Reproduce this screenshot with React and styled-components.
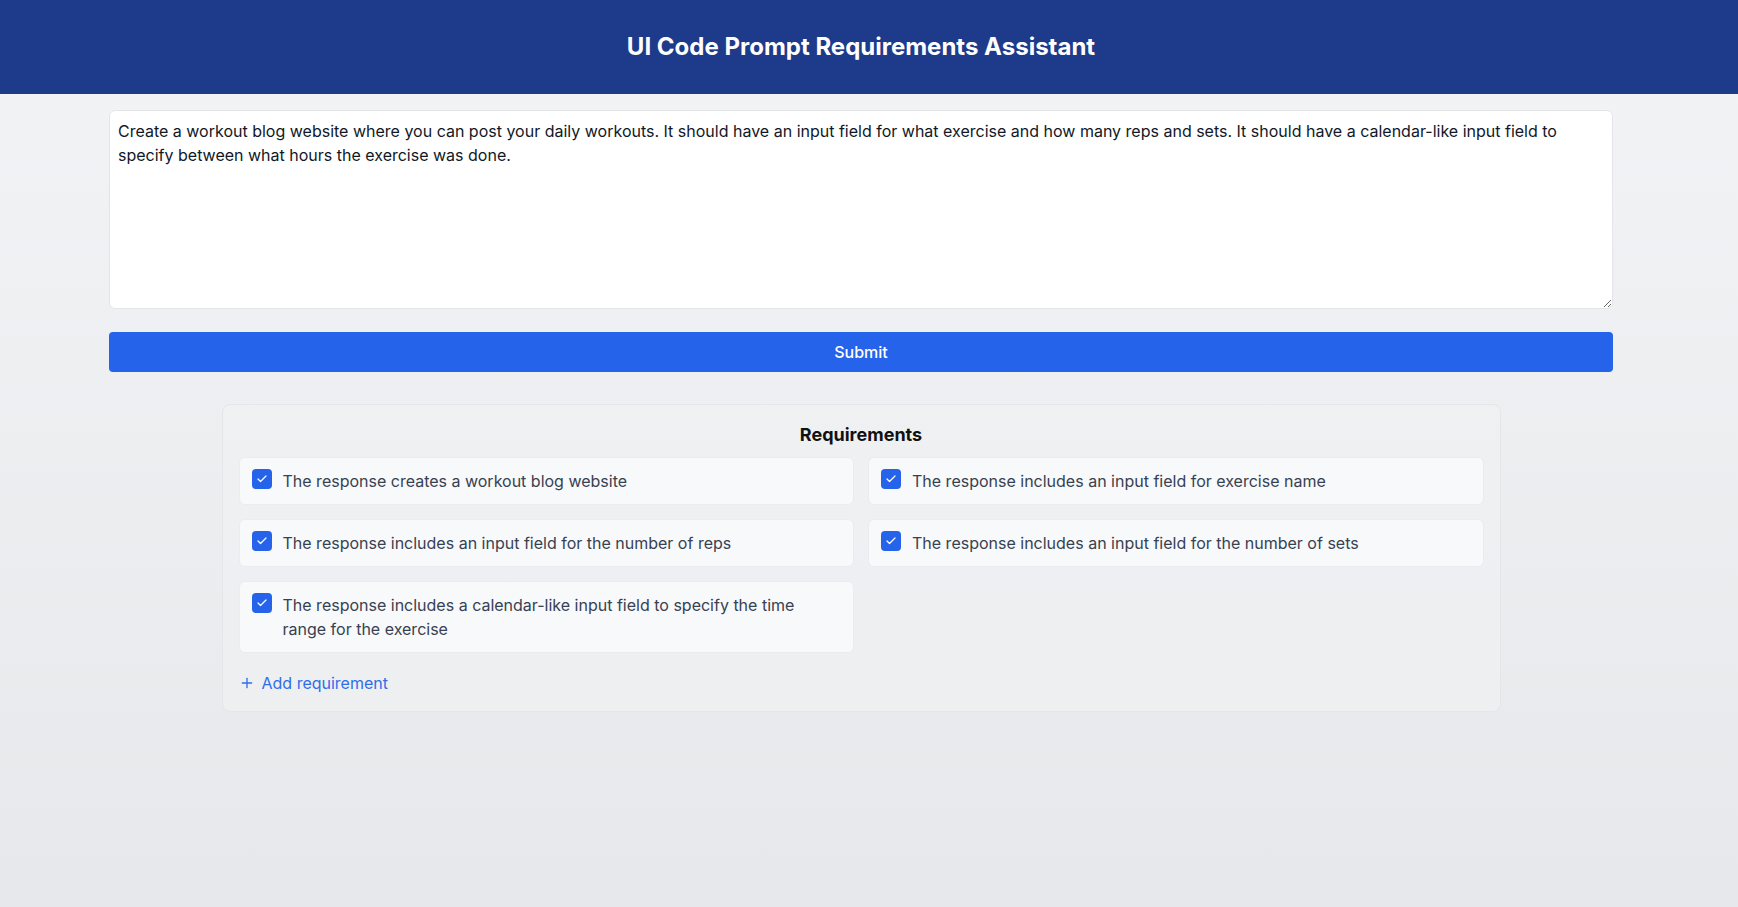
import React, { useState } from "react";
import styled, { createGlobalStyle } from "styled-components";
import { Plus, Check } from "lucide-react";

const GlobalStyle = createGlobalStyle`
  * {
    box-sizing: border-box;
  }
  body {
    margin: 0;
    font-family: Inter, "Noto Sans", "Liberation Sans", sans-serif;
    background: #eceef1;
  }
`;

const initialRequirements = [
  { id: 1, text: "The response creates a workout blog website", checked: true },
  { id: 2, text: "The response includes an input field for exercise name", checked: true },
  { id: 3, text: "The response includes an input field for the number of reps", checked: true },
  { id: 4, text: "The response includes an input field for the number of sets", checked: true },
  {
    id: 5,
    text: "The response includes a calendar-like input field to specify the time range for the exercise",
    checked: true,
  },
];

const App = () => {
  const [prompt, setPrompt] = useState(
    "Create a workout blog website where you can post your daily workouts. It should have an input field for what exercise and how many reps and sets. It should have a calendar-like input field to specify between what hours the exercise was done."
  );
  const [requirements, setRequirements] = useState(initialRequirements);

  const toggle = (id) => {
    setRequirements(
      requirements.map((r) => (r.id === id ? { ...r, checked: !r.checked } : r))
    );
  };

  return (
    <>
      <GlobalStyle />
      <Page>
        <Header>
          <Title>UI Code Prompt Requirements Assistant</Title>
        </Header>
        <Main>
          <PromptInput value={prompt} onChange={(e) => setPrompt(e.target.value)} />
          <SubmitButton>Submit</SubmitButton>
          <Panel>
            <PanelTitle>Requirements</PanelTitle>
            <Grid>
              {requirements.map((req) => (
                <Card key={req.id}>
                  <CheckBox $checked={req.checked} onClick={() => toggle(req.id)}>
                    {req.checked && <Check size={12} strokeWidth={2.5} color="#ffffff" />}
                  </CheckBox>
                  <CardText>{req.text}</CardText>
                </Card>
              ))}
            </Grid>
            <AddButton>
              <Plus size={16} strokeWidth={2} />
              Add requirement
            </AddButton>
          </Panel>
        </Main>
      </Page>
    </>
  );
};

export default App;

const Page = styled.div`
  min-height: 100vh;
  background: linear-gradient(180deg, #f3f4f6 0%, #e7e8eb 100%);
`;

const Header = styled.header`
  height: 94px;
  padding-right: 16px;
  background-color: #1e3a8a;
  display: flex;
  align-items: center;
  justify-content: center;
`;

const Title = styled.h1`
  margin: 0;
  color: #ffffff;
  font-size: 24px;
  line-height: 32px;
  font-weight: 700;
`;

const Main = styled.main`
  padding: 16px 125px 40px 109px;
  display: flex;
  flex-direction: column;
`;

const PromptInput = styled.textarea`
  width: 100%;
  height: 199px;
  padding: 8px;
  border: 1px solid #e3e5e8;
  border-radius: 6px;
  background: #ffffff;
  font-family: inherit;
  font-size: 16px;
  line-height: 24px;
  color: #111827;
  outline: none;
`;

const SubmitButton = styled.button`
  margin-top: 23px;
  height: 40px;
  width: 100%;
  border: none;
  border-radius: 4px;
  background-color: #2563eb;
  color: #ffffff;
  font-family: inherit;
  font-size: 16px;
  font-weight: 500;
  cursor: pointer;
`;

const Panel = styled.section`
  width: 1279px;
  margin: 32px auto 0;
  padding: 16px;
  border: 1px solid #e4e6ea;
  border-radius: 8px;
  background: rgba(240, 241, 244, 0.6);
`;

const PanelTitle = styled.h2`
  margin: 0 0 8px;
  text-align: center;
  font-size: 18px;
  line-height: 28px;
  font-weight: 700;
  color: #111111;
`;

const Grid = styled.div`
  display: grid;
  grid-template-columns: 1fr 1fr;
  gap: 14px;
  align-items: start;
`;

const Card = styled.div`
  display: flex;
  align-items: flex-start;
  gap: 11px;
  padding: 11px 12px;
  background: #f8f9fb;
  border: 1px solid #eaecef;
  border-radius: 6px;
`;

const CheckBox = styled.span`
  flex: 0 0 20px;
  width: 20px;
  height: 20px;
  border-radius: 4px;
  display: flex;
  align-items: center;
  justify-content: center;
  background: ${(p) => (p.$checked ? "#2563eb" : "#ffffff")};
  border: ${(p) => (p.$checked ? "none" : "1px solid #9ca3af")};
  cursor: pointer;
`;

const CardText = styled.span`
  font-size: 16px;
  line-height: 24px;
  color: #374151;
`;

const AddButton = styled.button`
  margin-top: 18px;
  padding: 0;
  display: flex;
  align-items: center;
  gap: 7px;
  border: none;
  background: none;
  color: #2f6ee8;
  font-family: inherit;
  font-size: 16px;
  line-height: 24px;
  cursor: pointer;
`;
